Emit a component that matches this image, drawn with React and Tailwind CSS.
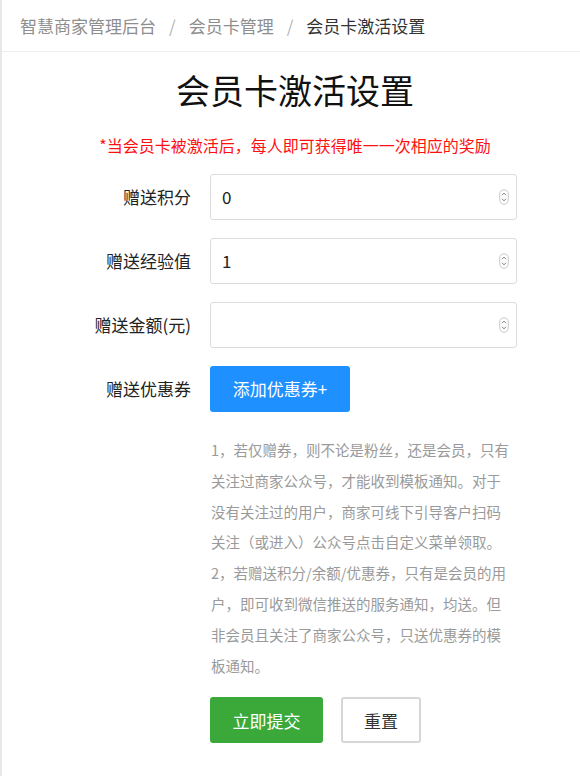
import React from "react";

const font = { fontFamily: '"Noto Sans CJK SC", "Noto Sans", sans-serif' };

function Spinner() {
  return (
    <svg width="10" height="16" viewBox="0 0 10 16" className="shrink-0">
      <rect x="0.75" y="0.75" width="8.5" height="14.5" rx="4.25" fill="#fff" stroke="#c8c8c8" strokeWidth="1" />
      <path d="M3 6.2 L5 4.2 L7 6.2" fill="none" stroke="#777" strokeWidth="1" />
      <path d="M3 9.8 L5 11.8 L7 9.8" fill="none" stroke="#777" strokeWidth="1" />
    </svg>
  );
}

function Row({ label, value }) {
  return (
    <div className="flex items-center h-[46px]">
      <div className="w-[210px] pr-[19px] text-right text-[17px] text-[#222]">{label}</div>
      <div className="w-[307px] h-[46px] border border-[#dcdcdc] rounded-[3px] flex items-center pl-[11px] pr-[7px] bg-white">
        <span className="flex-1 text-[17px] text-[#222]">{value}</span>
        <Spinner />
      </div>
    </div>
  );
}

export default function App() {
  const lines = [
    "1，若仅赠券，则不论是粉丝，还是会员，只有",
    "关注过商家公众号，才能收到模板通知。对于",
    "没有关注过的用户，商家可线下引导客户扫码",
    "关注（或进入）公众号点击自定义菜单领取。",
    "2，若赠送积分/余额/优惠券，只有是会员的用",
    "户，即可收到微信推送的服务通知，均送。但",
    "非会员且关注了商家公众号，只送优惠券的模",
    "板通知。",
  ];
  return (
    <div style={font} className="w-[580px] h-[776px] bg-white border-l-2 border-[#e8e8e8] overflow-hidden">
      <div className="h-[52px] border-b border-[#efefef] flex items-center pl-[18px] text-[17px]">
        <span className="text-[#8e8e8e]">智慧商家管理后台</span>
        <span className="text-[#b5b5b5] px-[13px]">/</span>
        <span className="text-[#8e8e8e]">会员卡管理</span>
        <span className="text-[#b5b5b5] px-[13px]">/</span>
        <span className="text-[#333]">会员卡激活设置</span>
      </div>

      <div className="pl-[8px]">
        <h1 className="text-center text-[34px] leading-[48px] text-[#111] mt-[14px]">会员卡激活设置</h1>
        <p className="text-center text-[16px] leading-[24px] text-[#ff1010] mt-[19px]">*当会员卡被激活后，每人即可获得唯一一次相应的奖励</p>
      </div>

      <div className="flex flex-col gap-[18px] mt-[17px] ml-[-2px]">
        <Row label="赠送积分" value="0" />
        <Row label="赠送经验值" value="1" />
        <Row label="赠送金额(元)" value="" />
        <div className="flex items-center h-[46px]">
          <div className="w-[210px] pr-[19px] text-right text-[17px] text-[#222]">赠送优惠券</div>
          <button className="w-[140px] h-[46px] rounded-[3px] bg-[#1e90ff] text-white text-[17px]">添加优惠券+</button>
        </div>
      </div>

      <div className="ml-[209px] mt-[23px] text-[14.5px] leading-[30.8px] text-[#9a9a9a] whitespace-nowrap">
        {lines.map((l, i) => (
          <div key={i}>{l}</div>
        ))}
      </div>

      <div className="flex gap-[18px] ml-[208px] mt-[16px]">
        <button className="w-[113px] h-[46px] rounded-[3px] bg-[#3aa93a] text-white text-[17px]">立即提交</button>
        <button className="w-[80px] h-[46px] rounded-[3px] bg-white border-2 border-[#d6d6d6] text-[#333] text-[17px]">重置</button>
      </div>
    </div>
  );
}
